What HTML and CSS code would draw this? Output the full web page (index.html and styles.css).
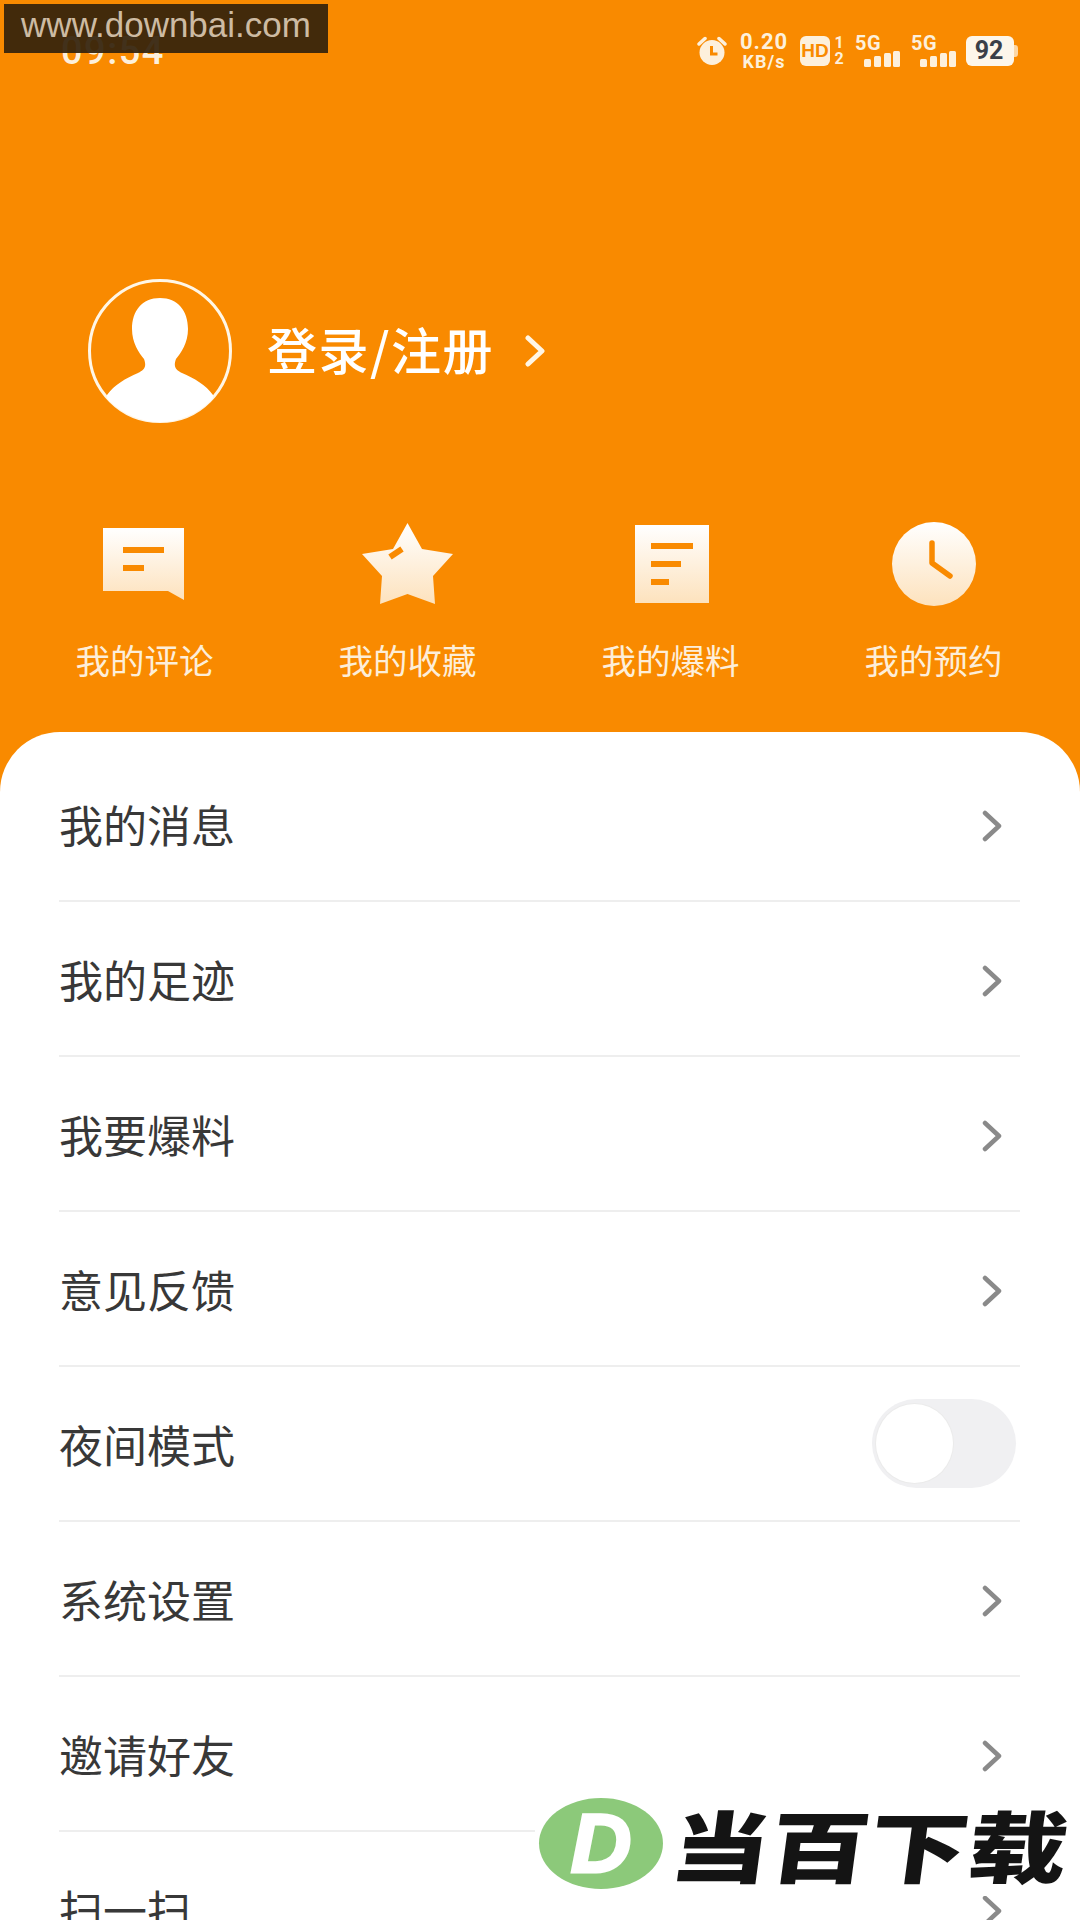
FILE: index.html
```html
<!DOCTYPE html>
<html lang="zh">
<head>
<meta charset="utf-8">
<title>我的</title>
<link rel="stylesheet" href="styles.css">
</head>
<body>
<div class="screen">
  <header class="hero">
    <div class="status">
      <span class="time">09:54</span>
      <div class="status-icons">
        <svg class="alarm" width="30" height="30" viewBox="0 0 30 30"><circle cx="15" cy="16.500" r="12.500" fill="#fdf0dc"/><path d="M2 8 8 2.500M28 8 22 2.500" stroke="#fdf0dc" stroke-width="3.500" stroke-linecap="round"/><path d="M14.500 10v8h6" fill="none" stroke="#f98a00" stroke-width="3"/></svg>
        <div class="speed"><span class="speed-num">0.20</span><span class="speed-unit">KB/s</span></div>
        <span class="hd">HD</span>
        <div class="sim"><span>1</span><span>2</span></div>
        <div class="net net-first">
          <span class="net-label">5G</span>
          <svg class="bars" width="36" height="16" viewBox="0 0 36 16"><g fill="#fdf0dc"><rect x="0" y="8" width="7" height="8" rx="1.500"/><rect x="10" y="5" width="7" height="11" rx="1.500"/><rect x="20" y="2" width="7" height="14" rx="1.500"/><rect x="29" y="0" width="7" height="16" rx="1.500"/></g></svg>
        </div>
        <div class="net net-second">
          <span class="net-label">5G</span>
          <svg class="bars" width="36" height="16" viewBox="0 0 36 16"><g fill="#fdf0dc"><rect x="0" y="8" width="7" height="8" rx="1.500"/><rect x="10" y="5" width="7" height="11" rx="1.500"/><rect x="20" y="2" width="7" height="14" rx="1.500"/><rect x="29" y="0" width="7" height="16" rx="1.500"/></g></svg>
        </div>
        <div class="battery"><span class="battery-body">92</span><span class="battery-tip"></span></div>
      </div>
    </div>

    <div class="profile">
      <svg class="avatar" width="144" height="144" viewBox="0 0 144 144">
        <defs><clipPath id="avatar-clip"><circle cx="72" cy="72" r="71"/></clipPath></defs>
        <circle cx="72" cy="72" r="70.500" fill="none" stroke="#fff6e6" stroke-width="3"/>
        <path fill="#fff" clip-path="url(#avatar-clip)" d="M72 19C90 19 100 32 100 50C100 64 93 74 88 80C85 88 88 91 94 94C106 99 118 106 125 116L125 150H19L19 116C26 106 38 99 50 94C56 91 59 88 56 80C51 74 44 64 44 50C44 32 54 19 72 19Z"/>
      </svg>
      <span class="login">登录/注册</span>
      <svg class="login-arrow" width="20" height="32" viewBox="0 0 20 32"><path d="M3 3 17 16 3 29" fill="none" stroke="#fff6e6" stroke-width="5" stroke-linecap="round" stroke-linejoin="round"/></svg>
    </div>

    <svg class="defs" width="0" height="0"><defs><linearGradient id="cream" x1="0" y1="0" x2="0" y2="1"><stop offset="0" stop-color="#ffffff"/><stop offset="1" stop-color="#fde2bd"/></linearGradient></defs></svg>

    <nav class="actions">
      <div class="action">
        <div class="action-icon icon-comment">
          <svg width="81" height="72" viewBox="0 0 81 72"><path fill="url(#cream)" d="M0 0H81V72L65 63H0Z"/><path fill="#f98a00" d="M20 19H61V25H20ZM20 37H41V43H20Z"/></svg>
        </div>
        <span class="action-label">我的评论</span>
      </div>
      <div class="action">
        <div class="action-icon">
          <svg width="91" height="82" viewBox="0 0 91 82"><path fill="url(#cream)" d="M45.500 0 60 26 91 31 71 53 73 81 45.500 71 18 81 20 53 0 31 31 26Z"/><path fill="none" stroke="#f98a00" stroke-width="6" d="M28 34 40 26"/></svg>
        </div>
        <span class="action-label">我的收藏</span>
      </div>
      <div class="action">
        <div class="action-icon icon-doc">
          <svg width="74" height="78" viewBox="0 0 74 78"><rect width="74" height="78" fill="url(#cream)"/><path fill="#f98a00" d="M16 18H58V24H16ZM16 36H46V42H16ZM16 54H34V60H16Z"/></svg>
        </div>
        <span class="action-label">我的爆料</span>
      </div>
      <div class="action">
        <div class="action-icon">
          <svg width="84" height="84" viewBox="0 0 84 84"><circle cx="42" cy="42" r="42" fill="url(#cream)"/><path d="M40 21V41L58 54" fill="none" stroke="#f98a00" stroke-width="5.500" stroke-linecap="round" stroke-linejoin="round"/></svg>
        </div>
        <span class="action-label">我的预约</span>
      </div>
    </nav>
  </header>

  <main class="card">
    <div class="row"><span>我的消息</span><svg class="chev" width="20" height="32" viewBox="0 0 20 32"><path d="M3 3 17 16 3 29" fill="none" stroke="#8a8a8a" stroke-width="4.500" stroke-linecap="round" stroke-linejoin="round"/></svg></div>
    <div class="row"><span>我的足迹</span><svg class="chev" width="20" height="32" viewBox="0 0 20 32"><path d="M3 3 17 16 3 29" fill="none" stroke="#8a8a8a" stroke-width="4.500" stroke-linecap="round" stroke-linejoin="round"/></svg></div>
    <div class="row"><span>我要爆料</span><svg class="chev" width="20" height="32" viewBox="0 0 20 32"><path d="M3 3 17 16 3 29" fill="none" stroke="#8a8a8a" stroke-width="4.500" stroke-linecap="round" stroke-linejoin="round"/></svg></div>
    <div class="row"><span>意见反馈</span><svg class="chev" width="20" height="32" viewBox="0 0 20 32"><path d="M3 3 17 16 3 29" fill="none" stroke="#8a8a8a" stroke-width="4.500" stroke-linecap="round" stroke-linejoin="round"/></svg></div>
    <div class="row"><span>夜间模式</span><div class="toggle"><div class="knob"></div></div></div>
    <div class="row"><span>系统设置</span><svg class="chev" width="20" height="32" viewBox="0 0 20 32"><path d="M3 3 17 16 3 29" fill="none" stroke="#8a8a8a" stroke-width="4.500" stroke-linecap="round" stroke-linejoin="round"/></svg></div>
    <div class="row"><span>邀请好友</span><svg class="chev" width="20" height="32" viewBox="0 0 20 32"><path d="M3 3 17 16 3 29" fill="none" stroke="#8a8a8a" stroke-width="4.500" stroke-linecap="round" stroke-linejoin="round"/></svg></div>
    <div class="row"><span>扫一扫</span><svg class="chev" width="20" height="32" viewBox="0 0 20 32"><path d="M3 3 17 16 3 29" fill="none" stroke="#8a8a8a" stroke-width="4.500" stroke-linecap="round" stroke-linejoin="round"/></svg></div>
  </main>

  <div class="watermark">www.downbai.com</div>

  <div class="logo">
    <div class="logo-oval"><span class="logo-d">D</span></div>
    <span class="logo-text">当百下载</span>
  </div>
</div>
</body>
</html>
```

FILE: styles.css
```css
* { box-sizing: border-box; }
html, body { margin: 0; padding: 0; }
body { width: 1080px; height: 1920px; overflow: hidden; background: #fff; font-family: "Noto Sans CJK SC", "Noto Sans", sans-serif; }
.screen { position: relative; width: 1080px; height: 1920px; overflow: hidden; background: #f98a00; }

.hero { height: 732px; background: #f98a00; }
.status { height: 80px; padding: 22px 62px 0 61px; display: flex; justify-content: space-between; align-items: center; color: #fdf0dc; }
.time { font-family: Roboto, sans-serif; font-size: 38px; font-weight: 500; letter-spacing: 1.500px; line-height: 1; }
.status-icons { display: flex; align-items: center; height: 34px; }
.speed { display: flex; flex-direction: column; align-items: center; margin-left: 13px; width: 48px; font-family: Roboto, sans-serif; font-weight: 700; line-height: 1; }
.speed-num { font-size: 22px; letter-spacing: 1px; }
.speed-unit { font-size: 18px; letter-spacing: 1px; margin-top: 0; }
.hd { margin-left: 12px; width: 30px; height: 30px; border-radius: 6px; background: #fdf0dc; color: #f98a00; font-family: "Liberation Sans", sans-serif; font-size: 19px; font-weight: 700; line-height: 30px; text-align: center; }
.sim { margin-left: 4px; width: 10px; display: flex; flex-direction: column; align-items: center; font-family: Roboto, sans-serif; font-size: 16px; font-weight: 700; line-height: 16px; }
.net { position: relative; width: 44px; height: 32px; }
.net-first { margin-left: 11px; }
.net-second { margin-left: 12px; }
.net-label { display: block; font-family: Roboto, sans-serif; font-size: 20px; font-weight: 700; line-height: 17px; letter-spacing: 0.500px; }
.bars { display: block; margin-left: 9px; margin-top: -1px; }
.battery { display: flex; align-items: center; margin-left: 11px; }
.battery-body { width: 48px; height: 30px; border-radius: 6px; background: #fdf6ea; color: #3a3f48; font-family: Roboto, sans-serif; font-size: 25px; font-weight: 700; line-height: 30px; text-align: center; padding-right: 2px; }
.battery-tip { width: 4px; height: 12px; background: #fdf0dc; opacity: .75; border-radius: 0 3px 3px 0; }

.profile { margin-top: 199px; padding-left: 88px; display: flex; align-items: center; }
.avatar { display: block; flex: none; }
.login { margin-left: 35px; margin-top: -6px; color: #fff; font-size: 50px; font-weight: 500; letter-spacing: 1.500px; line-height: 60px; }
.login-arrow { margin-left: 31px; }
.defs { position: absolute; }

.actions { margin-top: 96px; padding-left: 13px; display: grid; grid-template-columns: repeat(4, 263px); }
.action { display: flex; flex-direction: column; align-items: center; }
.action-icon { height: 90px; display: flex; align-items: center; justify-content: center; }
.icon-comment { margin-right: 3px; }
.icon-doc { margin-left: 2px; }
.action-label { margin-top: 28px; height: 44px; color: #fdeed9; font-size: 34.500px; line-height: 44px; }

.card { height: 1188px; background: #fff; border-radius: 60px 60px 0 0; padding: 15px 60px 0 59px; }
.row { height: 155px; border-bottom: 2px solid #eeeeee; display: flex; align-items: center; justify-content: space-between; padding-right: 18px; color: #383838; font-size: 44px; line-height: 60px; }
.chev { position: relative; top: 2px; }
.toggle { width: 144px; height: 89px; margin-right: -14px; border-radius: 45px; background: #f0f0f2; padding: 5px 0 5px 4px; }
.knob { width: 77px; height: 79px; border-radius: 50%; background: #fff; box-shadow: 0 0 0 1px #ebebeb; }

.watermark { position: absolute; left: 4px; top: 4px; width: 324px; height: 49px; background: rgba(52, 34, 12, .93); color: #cdbba3; font-family: "Liberation Sans", sans-serif; font-size: 35px; line-height: 41px; text-align: center; }

.logo { position: absolute; left: 535px; top: 1790px; width: 545px; height: 106px; background: #fff; display: flex; align-items: center; padding-left: 4px; }
.logo-oval { width: 124px; height: 91px; border-radius: 50%; background: #8cc97a; display: flex; align-items: center; justify-content: center; }
.logo-d { color: #fff; font-family: "Liberation Sans", sans-serif; font-size: 84px; font-weight: 700; font-style: italic; line-height: 1; -webkit-text-stroke: 3px #fff; }
.logo-text { margin-left: 9px; color: #141414; font-size: 78px; font-weight: 900; line-height: 1; white-space: nowrap; transform: scaleX(1.27) skewX(-6deg); transform-origin: left center; }
```
